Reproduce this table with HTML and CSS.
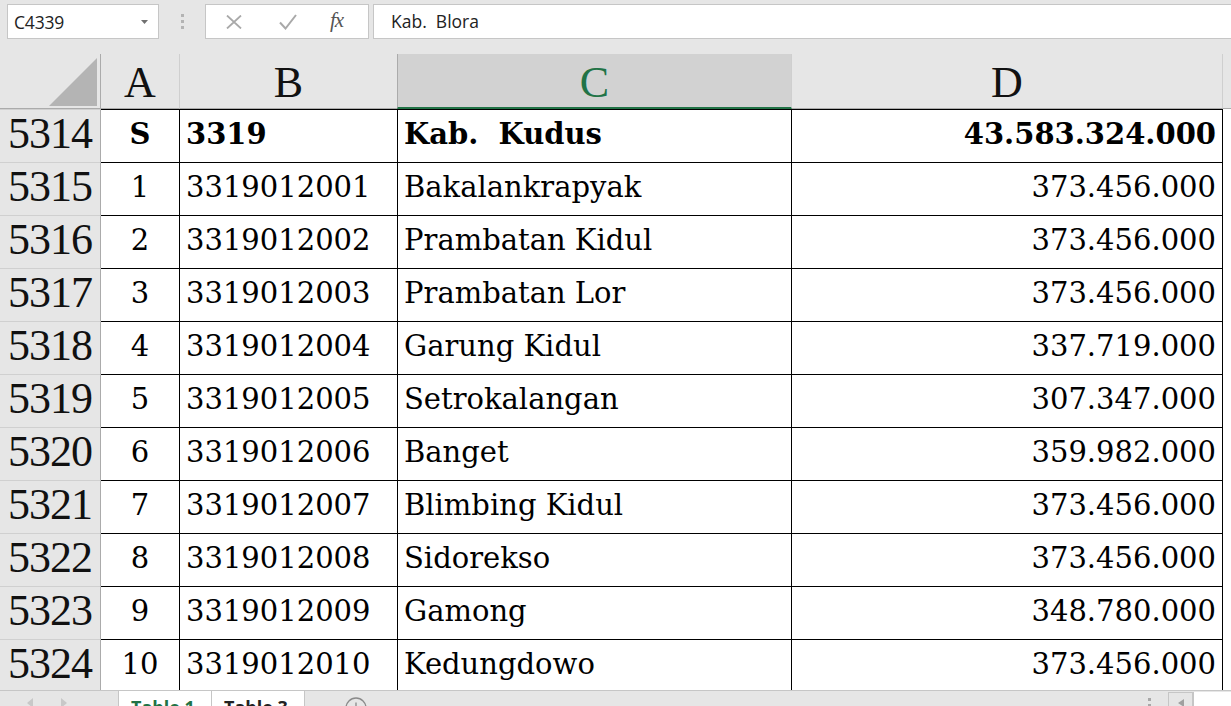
FILE: index.html
```html
<!DOCTYPE html>
<html lang="id">
<head>
<meta charset="utf-8">
<title>Sheet</title>
<link rel="stylesheet" href="styles.css">
</head>
<body>
<div class="app">
  <div class="topbar">
    <div class="namebox">
      <span class="namebox-text">C4339</span>
      <svg class="caret" width="7" height="4" viewBox="0 0 7 4"><path d="M0 0h7L3.5 4z" fill="#707070"/></svg>
    </div>
    <div class="grip"><i></i><i></i><i></i></div>
    <div class="fx-buttons">
      <svg class="fx-icon" width="18" height="14" viewBox="0 0 18 14"><path d="M2 0.5L16 13.5M16 0.5L2 13.5" stroke="#a9a9a9" stroke-width="1.8" fill="none"/></svg>
      <svg class="fx-icon" width="18" height="16" viewBox="0 0 18 16"><path d="M1 8.5L6.5 14.5L17 1" stroke="#a9a9a9" stroke-width="2" fill="none"/></svg>
      <span class="fx-text">fx</span>
    </div>
    <div class="formula-input">Kab.  Blora</div>
  </div>

  <div class="sheet">
    <div class="hdr corner"><svg width="48" height="48" viewBox="0 0 48 48"><path d="M48 0V48H0z" fill="#b4b4b4"/></svg></div>
    <div class="hdr col">A</div>
    <div class="hdr col">B</div>
    <div class="hdr col sel">C</div>
    <div class="hdr col">D</div>
    <div class="hdr col rest"></div>

    <div class="rh first">5314</div>
    <div class="c a b first">S</div>
    <div class="c l b first">3319</div>
    <div class="c l b first">Kab.  Kudus</div>
    <div class="c r b first">43.583.324.000</div>
    <div class="e first"></div>

    <div class="rh">5315</div><div class="c a">1</div><div class="c l">3319012001</div><div class="c l">Bakalankrapyak</div><div class="c r">373.456.000</div><div class="e"></div>
    <div class="rh">5316</div><div class="c a">2</div><div class="c l">3319012002</div><div class="c l">Prambatan Kidul</div><div class="c r">373.456.000</div><div class="e"></div>
    <div class="rh">5317</div><div class="c a">3</div><div class="c l">3319012003</div><div class="c l">Prambatan Lor</div><div class="c r">373.456.000</div><div class="e"></div>
    <div class="rh">5318</div><div class="c a">4</div><div class="c l">3319012004</div><div class="c l">Garung Kidul</div><div class="c r">337.719.000</div><div class="e"></div>
    <div class="rh">5319</div><div class="c a">5</div><div class="c l">3319012005</div><div class="c l">Setrokalangan</div><div class="c r">307.347.000</div><div class="e"></div>
    <div class="rh">5320</div><div class="c a">6</div><div class="c l">3319012006</div><div class="c l">Banget</div><div class="c r">359.982.000</div><div class="e"></div>
    <div class="rh">5321</div><div class="c a">7</div><div class="c l">3319012007</div><div class="c l">Blimbing Kidul</div><div class="c r">373.456.000</div><div class="e"></div>
    <div class="rh">5322</div><div class="c a">8</div><div class="c l">3319012008</div><div class="c l">Sidorekso</div><div class="c r">373.456.000</div><div class="e"></div>
    <div class="rh">5323</div><div class="c a">9</div><div class="c l">3319012009</div><div class="c l">Gamong</div><div class="c r">348.780.000</div><div class="e"></div>
    <div class="rh">5324</div><div class="c a">10</div><div class="c l">3319012010</div><div class="c l">Kedungdowo</div><div class="c r">373.456.000</div><div class="e"></div>
  </div>

  <div class="tabbar">
    <div class="nav">
      <svg width="8" height="10" viewBox="0 0 8 10"><path d="M7 0V10L1 5z" fill="#c8c8c8"/></svg>
      <svg width="8" height="10" viewBox="0 0 8 10"><path d="M1 0V10L7 5z" fill="#c8c8c8"/></svg>
    </div>
    <div class="tab active">Table 1</div>
    <div class="tab">Table 3</div>
    <div class="add"><svg width="22" height="22" viewBox="0 0 22 22"><circle cx="11" cy="11" r="10" fill="none" stroke="#8a8a8a" stroke-width="1.3"/><path d="M11 5.5V16.5M5.5 11H16.5" stroke="#8a8a8a" stroke-width="1.3"/></svg></div>
    <div class="spacer"></div>
    <div class="grip2"><i></i><i></i></div>
    <div class="scroll-btn"><svg width="6" height="8" viewBox="0 0 6 8"><path d="M6 0V8L0 4z" fill="#a0a0a0"/></svg></div>
    <div class="scroll-track"></div>
  </div>
</div>
</body>
</html>
```

FILE: styles.css
```css
* { box-sizing: border-box; margin: 0; padding: 0; }
html, body { width: 1231px; height: 706px; overflow: hidden; background: #e6e6e6; }
body { font-family: "Open Sans", "Noto Sans", sans-serif; }

.app { display: flex; flex-direction: column; height: 706px; }

.topbar {
  height: 54px;
  display: flex;
  align-items: flex-start;
  padding: 4px 0 0 7px;
  flex: none;
}
.namebox {
  width: 152px; height: 35px;
  background: #fff;
  border: 1px solid #c6c6c6;
  display: flex; align-items: center; justify-content: space-between;
  padding: 0 10px 0 6px;
}
.namebox-text { font-size: 17.5px; color: #222; letter-spacing: -0.2px; }
.caret { margin-top: 1px; }
.grip {
  width: 46px; height: 35px;
  display: flex; flex-direction: column; align-items: center; justify-content: center; gap: 3px;
}
.grip i { display: block; width: 3px; height: 3px; background: #b3b3b3; }
.fx-buttons {
  width: 164px; height: 35px;
  background: #fff;
  border: 1px solid #c6c6c6;
  display: flex; align-items: center;
  padding-left: 19px;
  gap: 36px;
}
.fx-text {
  font-family: "Liberation Serif", serif; font-style: italic;
  font-size: 21px; color: #555; margin-left: -3px; margin-top: -3px;
  letter-spacing: -1px;
}
.formula-input {
  flex: 1; height: 35px; margin-left: 4px;
  background: #fff;
  border: 1px solid #c6c6c6; border-right: none;
  padding-left: 17px;
  font-size: 17.5px; color: #222; line-height: 33px;
  white-space: pre;
}

.sheet {
  flex: none;
  height: 636px;
  overflow: hidden;
  display: grid;
  grid-template-columns: 101px 79px 218px 394px 431px 8px;
  grid-template-rows: 55px 54px repeat(10, 53px);
  background: #fff;
}
.hdr {
  background: #e6e6e6;
  border-bottom: 1px solid #ababab;
  border-right: 1px solid #cfcfcf;
  font-family: "Liberation Serif", serif;
  font-size: 44px; color: #111;
  display: flex; align-items: center; justify-content: center;
  padding-top: 3px;
}
.hdr.corner { border-right: 1px solid #ababab; align-items: flex-end; justify-content: flex-end; padding: 0 3px 2px 0; }
.hdr.sel { background: #d2d2d2; color: #217346; border-bottom: 2px solid #217346; padding-top: 4px; border-left: 1px solid #ababab; margin-left: -1px; }
.hdr.rest { border-right: none; }

.rh {
  background: #e6e6e6;
  border-right: 1px solid #ababab;
  border-bottom: 1px solid #d0d0d0;
  font-family: "Liberation Serif", serif;
  font-size: 44px; letter-spacing: -1px;
  color: #111;
  display: flex; align-items: center; justify-content: center;
  padding-bottom: 6px;
}
.rh.first { border-top: 1px solid #d0d0d0; }

.c {
  border-right: 1px solid #000;
  border-bottom: 1px solid #000;
  font-family: "DejaVu Serif", serif;
  font-size: 29px;
  color: #000;
  display: flex; align-items: center;
  white-space: pre;
  overflow: hidden;
  padding-bottom: 5px;
}
.c.first { border-top: 1px solid #000; }
.c.b { font-weight: bold; }
.c.a { justify-content: center; }
.c.l { padding-left: 6px; }
.c.r { justify-content: flex-end; padding-right: 6px; }
.e { background: #fff; }

.tabbar {
  flex: none;
  height: 16px;
  border-top: 1px solid #c6c6c6;
  display: flex; align-items: flex-start;
  overflow: hidden;
  background: #e6e6e6;
}
.nav { width: 118px; display: flex; gap: 26px; padding: 7px 0 0 26px; }
.tab {
  height: 24px;
  width: 94px;
  background: #fff;
  border-right: 1px solid #c6c6c6;
  font-weight: bold; font-size: 18px; color: #222;
  padding: 0 0 0 12px;
  line-height: 24px;
  margin-top: -1px;
  padding-top: 5px;
  white-space: nowrap;
  overflow: hidden;
}
.tab.active { color: #217346; border-left: 1px solid #c6c6c6; }
.tab + .tab { width: 93px; }
.add { padding: 6px 0 0 40px; }
.spacer { flex: 1; }
.grip2 { display: flex; flex-direction: column; gap: 3px; padding: 7px 17px 0 0; }
.grip2 i { display: block; width: 3px; height: 3px; background: #a8a8a8; }
.scroll-btn {
  width: 25px; height: 20px;
  border: 1px solid #c6c6c6; border-bottom: none;
  background: #e6e6e6;
  display: flex; justify-content: center; padding-top: 6px;
  margin-top: 1px;
}
.scroll-track { width: 38px; height: 20px; background: #fff; border-left: 1px solid #c6c6c6; margin-top: 1px; }
```
